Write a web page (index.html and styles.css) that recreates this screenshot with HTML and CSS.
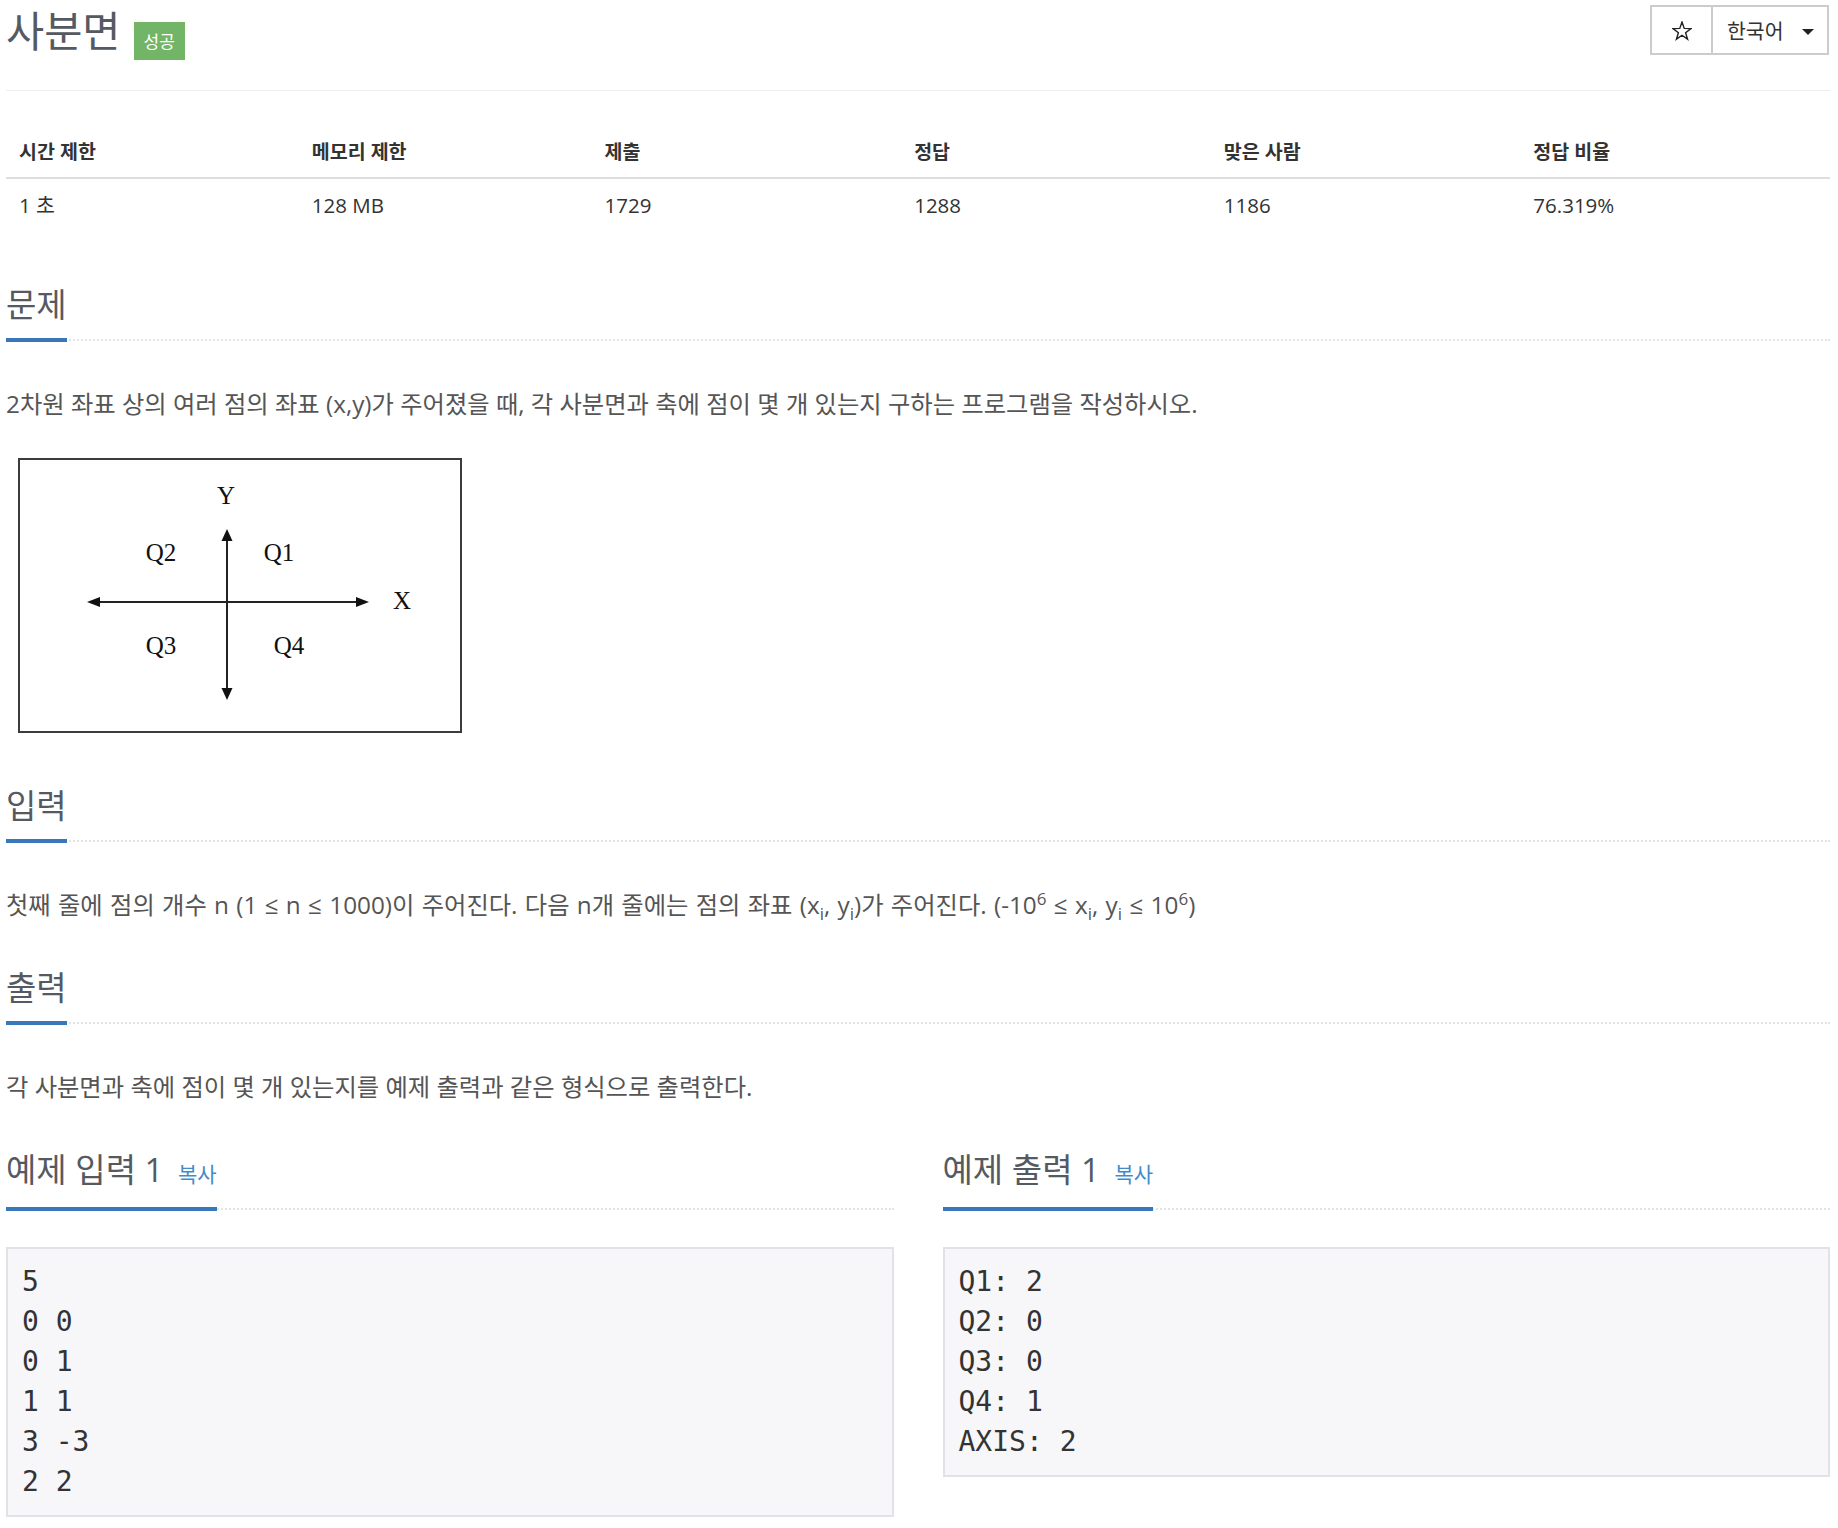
FILE: index.html
```html
<!DOCTYPE html>
<html lang="ko">
<head>
<meta charset="utf-8">
<title>사분면</title>
<link rel="stylesheet" href="styles.css">
</head>
<body>
<div class="page">
  <div class="page-header">
    <div class="title-wrap">
      <h1 class="title">사분면</h1>
      <span class="badge">성공</span>
    </div>
    <div class="btn-group">
      <button class="btn star" type="button">
        <svg width="20" height="20" viewBox="0 0 20 20"><polygon points="10,1 12.23,7.43 19.03,7.56 13.61,11.67 15.58,18.19 10,14.3 4.42,18.19 6.39,11.67 0.97,7.56 7.77,7.43" fill="none" stroke="#222" stroke-width="1.4" stroke-linejoin="miter"/></svg>
      </button>
      <button class="btn lang" type="button">한국어<span class="caret"></span></button>
    </div>
  </div>

  <table class="info">
    <thead>
      <tr>
        <th class="w16">시간 제한</th>
        <th class="w16">메모리 제한</th>
        <th class="w17">제출</th>
        <th class="w17">정답</th>
        <th class="w17">맞은 사람</th>
        <th class="w17">정답 비율</th>
      </tr>
    </thead>
    <tbody>
      <tr>
        <td>1 초</td>
        <td>128 MB</td>
        <td>1729</td>
        <td>1288</td>
        <td>1186</td>
        <td>76.319%</td>
      </tr>
    </tbody>
  </table>

  <section class="sec first">
    <div class="headline"><h2>문제</h2></div>
    <div class="sec-body">
      <p>2차원 좌표 상의 여러 점의 좌표 (x,y)가 주어졌을 때, 각 사분면과 축에 점이 몇 개 있는지 구하는 프로그램을 작성하시오.</p>
      <div class="figure">
        <svg width="444" height="275" viewBox="0 0 444 275">
          <rect x="1" y="1" width="442" height="273" fill="#fff" stroke="#3c3c3c" stroke-width="2"/>
          <line x1="80" y1="144" x2="340" y2="144" stroke="#222" stroke-width="2"/>
          <polygon points="69,144 82,139 82,149" fill="#111"/>
          <polygon points="351,144 338,139 338,149" fill="#111"/>
          <line x1="209" y1="82" x2="209" y2="231" stroke="#222" stroke-width="2"/>
          <polygon points="209,71 203.5,83 214.5,83" fill="#111"/>
          <polygon points="209,242 203.5,230 214.5,230" fill="#111"/>
          <g class="lbl">
            <text x="208" y="46" text-anchor="middle">Y</text>
            <text x="143" y="103" text-anchor="middle">Q2</text>
            <text x="261" y="103" text-anchor="middle">Q1</text>
            <text x="384" y="151" text-anchor="middle">X</text>
            <text x="143" y="196" text-anchor="middle">Q3</text>
            <text x="271" y="196" text-anchor="middle">Q4</text>
          </g>
        </svg>
      </div>
    </div>
  </section>

  <section class="sec after-fig">
    <div class="headline"><h2>입력</h2></div>
    <div class="sec-body">
      <p class="wide">첫째 줄에 점의 개수 n (1 ≤ n ≤ 1000)이 주어진다. 다음 n개 줄에는 점의 좌표 (x<sub>i</sub>, y<sub>i</sub>)가 주어진다. (-10<sup>6</sup> ≤ x<sub>i</sub>, y<sub>i</sub> ≤ 10<sup>6</sup>)</p>
    </div>
  </section>

  <section class="sec">
    <div class="headline"><h2>출력</h2></div>
    <div class="sec-body">
      <p>각 사분면과 축에 점이 몇 개 있는지를 예제 출력과 같은 형식으로 출력한다.</p>
    </div>
  </section>

  <div class="samples">
    <section class="sample">
      <div class="headline"><h2>예제 입력 1 <span class="copy">복사</span></h2></div>
      <pre>5
0 0
0 1
1 1
3 -3
2 2</pre>
    </section>
    <section class="sample">
      <div class="headline"><h2>예제 출력 1 <span class="copy">복사</span></h2></div>
      <pre>Q1: 2
Q2: 0
Q3: 0
Q4: 1
AXIS: 2</pre>
    </section>
  </div>
</div>
</body>
</html>
```

FILE: styles.css
```css
html, body {
  margin: 0;
  padding: 0;
  background: #fff;
}

body {
  font-family: "Open Sans", "Noto Sans CJK KR", sans-serif;
  color: #555;
}

.page {
  padding: 0 8px 0 6px;
}

/* header */
.page-header {
  display: flex;
  justify-content: space-between;
  align-items: flex-start;
  height: 91px;
  box-sizing: border-box;
  border-bottom: 1px solid #eee;
}

.title-wrap {
  display: flex;
  align-items: flex-start;
}

.title {
  margin: 0;
  font-size: 41.5px;
  font-weight: normal;
  line-height: 62px;
  color: #555a62;
}

.badge {
  margin-top: 22px;
  margin-left: 13px;
  height: 38px;
  line-height: 38px;
  padding: 0 10px;
  font-size: 17px;
  color: #fff;
  background: #73b566;
  font-family: "Noto Sans CJK KR", sans-serif;
}

.btn-group {
  display: flex;
  margin-top: 5px;
  margin-right: 1px;
}

.btn {
  height: 50px;
  box-sizing: border-box;
  border: 2px solid #ccc;
  background: #fff;
  margin: 0;
  font-family: "Noto Sans CJK KR", sans-serif;
  color: #333;
  display: flex;
  align-items: center;
}

.star {
  width: 63px;
  justify-content: center;
  padding: 0;
}

.star svg {
  display: block;
  margin-top: 1px;
}

.lang {
  width: 116px;
  border-left: 0;
  padding: 0 0 0 14px;
  font-size: 20.5px;
}

.caret {
  display: inline-block;
  width: 0;
  height: 0;
  margin-left: 18px;
  margin-top: 3px;
  border-top: 6px solid #222;
  border-left: 6px solid transparent;
  border-right: 6px solid transparent;
}

/* info table */
.info {
  margin-top: 36px;
  width: 100%;
  border-collapse: separate;
  border-spacing: 0;
  table-layout: fixed;
  color: #333;
}

.w16 { width: 16%; }
.w17 { width: 17%; }

.info th {
  text-align: left;
  padding: 14px 13px;
  line-height: 22px;
  font-size: 19.5px;
  font-weight: bold;
  border-bottom: 2px solid #ddd;
}

.info td {
  padding: 13px 13px;
  line-height: 26px;
  font-size: 20.5px;
}

/* sections */
.sec {
  margin-top: 48px;
}

.sec.first {
  margin-top: 56px;
}

.sec.after-fig {
  margin-top: 55px;
}

.headline {
  border-bottom: 2px dotted #dfe3ea;
}

.headline h2 {
  display: inline-block;
  margin: 0 0 -3px 0;
  padding: 0 0 15px 0;
  font-size: 33px;
  line-height: 36px;
  font-weight: normal;
  color: #555a62;
  border-bottom: 4px solid #3877ba;
}

.sec-body {
  margin-top: 46px;
}

.sec-body p {
  margin: 0;
  font-size: 24.3px;
  line-height: 34px;
  color: #555;
}

.sec-body p.wide {
  word-spacing: 1px;
}

sub, sup {
  font-size: 17px;
  line-height: 0;
}

.figure {
  margin: 37px 0 0 12px;
}

.figure svg {
  display: block;
}

.lbl text {
  font-family: "Liberation Serif", serif;
  font-size: 25px;
  fill: #111;
}

/* samples */
.samples {
  margin-top: 48px;
  display: grid;
  grid-template-columns: 1fr 1fr;
  column-gap: 49px;
}

.copy {
  margin-left: 6px;
  font-size: 21px;
  color: #428bca;
}

.sample pre {
  margin: 37px 0 0 0;
  padding: 13px 14px;
  border: 2px solid #e1e1e8;
  background: #f7f7f9;
  font-family: "DejaVu Sans Mono", monospace;
  font-size: 28px;
  line-height: 40px;
  color: #333;
}
```
